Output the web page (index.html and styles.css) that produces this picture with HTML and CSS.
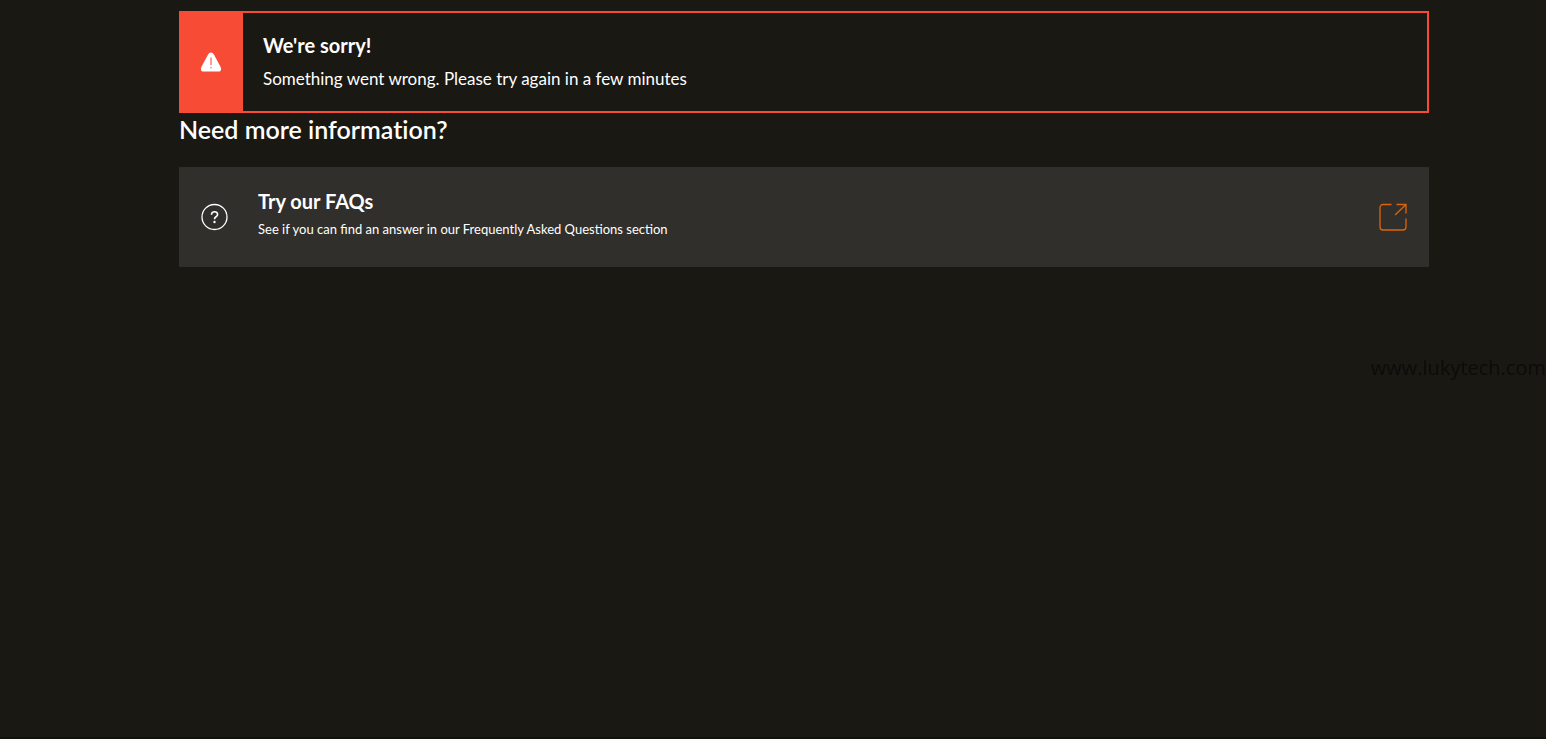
FILE: index.html
```
<!DOCTYPE html>
<html lang="en">
<head>
    <meta charset="UTF-8">
    <meta name="viewport" content="width=device-width, initial-scale=1.0">
    <title>We're sorry!</title>
    <link rel="stylesheet" href="styles.css">
</head>
<body>
    <main class="page">
        <div class="content">
            <!-- Error message -->
            <section class="alert" role="alert">
                <div class="alert-icon">
                    <svg width="22" height="22" viewBox="0 0 22 22" aria-hidden="true">
                        <path d="M11 1.5c1.3 0 2.2.8 2.9 2l6.6 12.2c1.2 2.5.6 4.8-2 4.8h-15c-2.6 0-3.2-2.3-2-4.8L8.1 3.5c.7-1.2 1.6-2 2.9-2z" fill="#fff"/>
                        <path d="M11 6.5v7.5M11 16v1.2" stroke="#f98475" stroke-width="1.6" fill="none"/>
                    </svg>
                </div>
                <div class="alert-text">
                    <h1 class="box-title">We're sorry!</h1>
                    <p class="alert-message">Something went wrong. Please try again in a few minutes</p>
                </div>
            </section>

            <!-- Help links -->
            <h2 class="section-title">Need more information?</h2>
            <a class="help-link" href="#">
                <svg class="help-icon" width="28" height="28" viewBox="0 0 28 28" fill="none" aria-hidden="true">
                    <circle cx="13.5" cy="14" r="12.5" stroke="#fff" stroke-width="1.3"/>
                    <path d="M10.5 11.8c0-1.9 1.2-3 3-3s3.1 1.1 3.1 2.7c0 2.3-3 2.2-3 4.3v.5" stroke="#fff" stroke-width="1.6"/>
                    <circle cx="13.5" cy="19" r="1.2" fill="#fff"/>
                </svg>
                <span class="help-text">
                    <strong class="box-title">Try our FAQs</strong>
                    <span class="help-note">See if you can find an answer in our Frequently Asked Questions section</span>
                </span>
                <svg width="28" height="28" viewBox="0 0 28 28" fill="none" stroke="#de6407" stroke-width="1.3" aria-hidden="true">
                    <path d="M12.5 1.5H4a3 3 0 0 0-3 3V24a3 3 0 0 0 3 3h20a3 3 0 0 0 3-3v-8.5"/>
                    <path d="M17.5 1.5H27v9M27 1.5L16 12"/>
                </svg>
            </a>
        </div>
    </main>
    <div class="watermark">www.lukytech.com</div>
</body>
</html>
```
FILE: styles.css
```
/* Global Styles */
* {
    box-sizing: border-box;
}

body {
    font-family: Lato, sans-serif;
    background-color: #191813;
    color: #fff;
    margin: 0;
    min-height: 100vh;
    border-bottom: 2px solid #11100d;
}

.page {
    padding: 11px 0 0 62px;
}

.content {
    max-width: 1250px;
    margin: 0 auto;
}

.box-title {
    font-size: 20px;
    font-weight: 700;
    line-height: 24px;
    margin: 0;
}

/* Error message */
.alert {
    display: flex;
    border: 2px solid #f84b35;
}

.alert-icon {
    display: flex;
    align-items: center;
    justify-content: center;
    width: 62px;
    padding-right: 2px;
    background-color: #f84b35;
}

.alert-text {
    padding: 20px;
}

.alert-message {
    font-size: 17px;
    line-height: 24px;
    margin: 10px 0 0;
}

/* Help links */
.section-title {
    font-size: 25px;
    font-weight: 600;
    font-variant-ligatures: none;
    line-height: 32px;
    margin: 0 0 22px;
}

.help-link {
    display: flex;
    align-items: center;
    min-height: 100px;
    padding: 20px 22px;
    background-color: #302f2b;
    color: #fff;
    text-decoration: none;
}

.help-icon {
    margin-right: 29px;
}

.help-text {
    display: flex;
    flex: 1;
    flex-direction: column;
    padding-bottom: 6px;
}

.help-note {
    font-size: 13px;
    line-height: 20px;
    margin-top: 6px;
}

.watermark {
    position: fixed;
    top: 354px;
    right: 0;
    font-family: "Open Sans", sans-serif;
    font-size: 20px;
    line-height: 28px;
    color: #0d0c0a;
}
```
